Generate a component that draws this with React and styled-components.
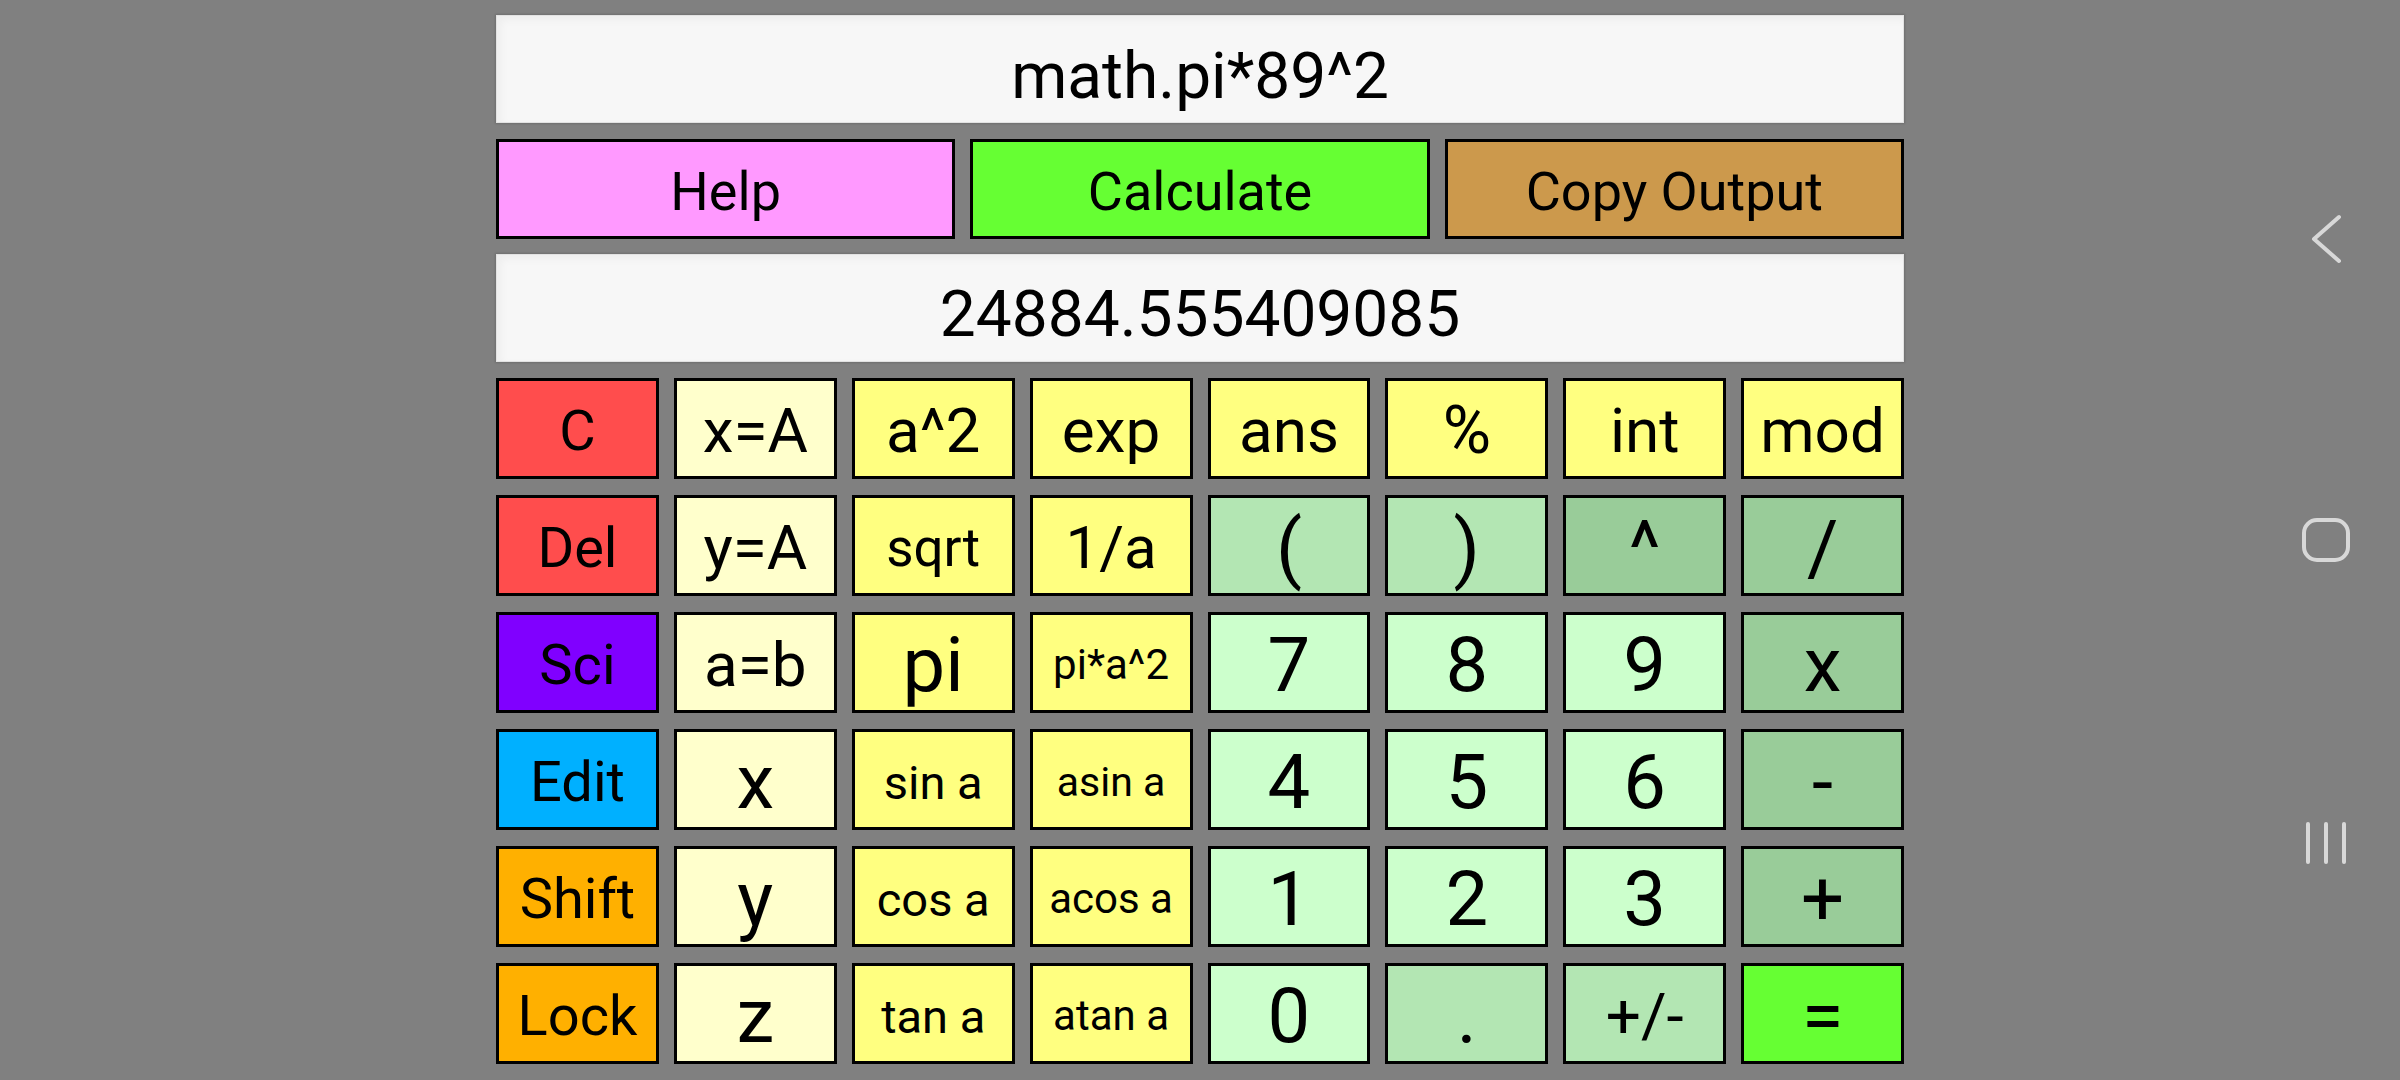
import React from 'react';
import styled, { createGlobalStyle } from 'styled-components';

const GlobalStyle = createGlobalStyle`
  html, body {
    margin: 0;
    padding: 0;
    background: #808080;
  }
  body {
    font-family: Roboto, "Noto Sans", "Liberation Sans", sans-serif;
    color: #000;
  }
`;

const palette = {
    red: '#ff4d4d',
    purple: '#8000ff',
    blue: '#00b0ff',
    orange: '#ffb000',
    cream: '#ffffcc',
    yellow: '#ffff80',
    mint: '#ccffcc',
    sage: '#b3e6b3',
    moss: '#99cc99',
    lime: '#66ff33',
};

// label, colour, font size
const keys = [
    [['C', 'red', 56], ['x=A', 'cream', 62], ['a^2', 'yellow', 62], ['exp', 'yellow', 62],
     ['ans', 'yellow', 62], ['%', 'yellow', 66], ['int', 'yellow', 62], ['mod', 'yellow', 62]],
    [['Del', 'red', 56], ['y=A', 'cream', 62], ['sqrt', 'yellow', 53], ['1/a', 'yellow', 60],
     ['(', 'sage', 76], [')', 'sage', 76], ['^', 'moss', 76], ['/', 'moss', 76]],
    [['Sci', 'purple', 56], ['a=b', 'cream', 62], ['pi', 'yellow', 76], ['pi*a^2', 'yellow', 42],
     ['7', 'mint', 76], ['8', 'mint', 76], ['9', 'mint', 76], ['x', 'moss', 76]],
    [['Edit', 'blue', 56], ['x', 'cream', 76], ['sin a', 'yellow', 47], ['asin a', 'yellow', 41],
     ['4', 'mint', 76], ['5', 'mint', 76], ['6', 'mint', 76], ['-', 'moss', 76]],
    [['Shift', 'orange', 56], ['y', 'cream', 76], ['cos a', 'yellow', 47], ['acos a', 'yellow', 42],
     ['1', 'mint', 76], ['2', 'mint', 76], ['3', 'mint', 76], ['+', 'moss', 76]],
    [['Lock', 'orange', 56], ['z', 'cream', 76], ['tan a', 'yellow', 47], ['atan a', 'yellow', 42],
     ['0', 'mint', 76], ['.', 'sage', 76], ['+/-', 'sage', 62], ['=', 'lime', 76]],
];

const App = () => {
    return (
        <Screen>
            <GlobalStyle />
            <Calculator>
                <Display>math.pi*89^2</Display>
                <ActionRow>
                    <ActionButton bg="#ff99ff">Help</ActionButton>
                    <ActionButton bg="#66ff33">Calculate</ActionButton>
                    <ActionButton bg="#cc994c">Copy Output</ActionButton>
                </ActionRow>
                <Display $output>24884.555409085</Display>
                <Keypad>
                    {keys.flat().map(([label, colour, size], i) => (
                        <Key key={i} bg={palette[colour]} size={size}>{label}</Key>
                    ))}
                </Keypad>
            </Calculator>
            <NavBar>
                <svg width="34" height="50" viewBox="0 0 34 50">
                    <polyline points="30,3 5,25 30,47" fill="none" stroke="#d8d8d8" strokeWidth="4" strokeLinecap="round" strokeLinejoin="round" />
                </svg>
                <HomeIcon width="50" height="46" viewBox="0 0 50 46">
                    <rect x="3" y="3" width="44" height="40" rx="13" fill="none" stroke="#d8d8d8" strokeWidth="4" />
                </HomeIcon>
                <RecentsIcon width="44" height="44" viewBox="0 0 44 44">
                    <line x1="4" y1="3" x2="4" y2="41" stroke="#d8d8d8" strokeWidth="4" strokeLinecap="round" />
                    <line x1="22" y1="3" x2="22" y2="41" stroke="#d8d8d8" strokeWidth="4" strokeLinecap="round" />
                    <line x1="40" y1="3" x2="40" y2="41" stroke="#d8d8d8" strokeWidth="4" strokeLinecap="round" />
                </RecentsIcon>
            </NavBar>
        </Screen>
    )
}

export default App

const Screen = styled.div`
    width: 2400px;
    height: 1080px;
    display: grid;
    grid-template-columns: 1fr 1408px 1fr;
    background: #808080;
    overflow: hidden;
`;

const Calculator = styled.div`
    grid-column: 2;
    display: flex;
    flex-direction: column;
    padding-top: 15px;
`;

const Display = styled.div`
    box-sizing: border-box;
    height: 108px;
    margin-top: ${props => props.$output ? '15px' : '0'};
    display: flex;
    align-items: center;
    justify-content: center;
    padding-top: ${props => props.$output ? '14px' : '16px'};
    background: #f7f7f7;
    border: 1px solid #e2e2e2;
    box-shadow: 0 0 2px 1px rgba(0, 0, 0, 0.14), inset 4px 4px 8px rgba(0, 0, 0, 0.04);
    font-size: 64px;
    line-height: 1;
`;

const ActionRow = styled.div`
    display: grid;
    grid-template-columns: repeat(3, 1fr);
    column-gap: 15px;
    height: 100px;
    margin-top: 16px;
`;

const ActionButton = styled.div`
    box-sizing: border-box;
    display: flex;
    align-items: center;
    justify-content: center;
    padding-top: 6px;
    background: ${props => props.bg};
    border: 3px solid #000;
    font-size: 54px;
    line-height: 1;
`;

const Keypad = styled.div`
    display: grid;
    grid-template-columns: repeat(8, 1fr);
    grid-auto-rows: 101px;
    column-gap: 15px;
    row-gap: 16px;
    margin-top: 16px;
`;

const Key = styled.div`
    box-sizing: border-box;
    display: flex;
    align-items: center;
    justify-content: center;
    padding-top: 5px;
    background: ${props => props.bg};
    border: 3px solid #000;
    font-size: ${props => props.size}px;
    line-height: 1;
    white-space: nowrap;
`;

const NavBar = styled.div`
    grid-column: 3;
    justify-self: end;
    width: 148px;
    display: flex;
    flex-direction: column;
    align-items: center;
    padding-top: 214px;
`;

const HomeIcon = styled.svg`
    margin-top: 253px;
`;

const RecentsIcon = styled.svg`
    margin-top: 258px;
`;
